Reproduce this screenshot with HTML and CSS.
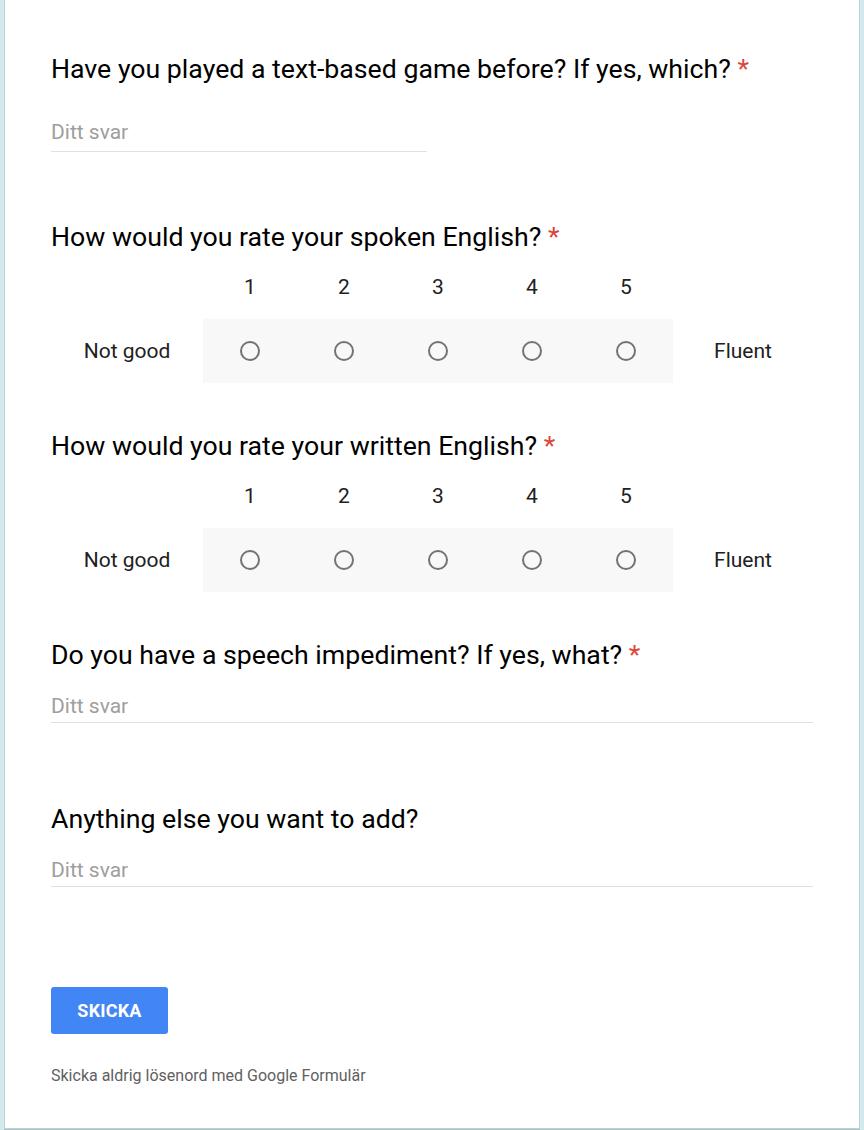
FILE: index.html
```html
<!DOCTYPE html>
<html lang="sv">
<head>
<meta charset="utf-8">
<title>Formulär</title>
<link rel="stylesheet" href="styles.css">
</head>
<body>
<div class="card">
  <div class="q q-first">
    <div class="title">Have you played a text-based game before? If yes, which? <span class="req">*</span></div>
    <div class="answer answer-short answer-first">Ditt svar</div>
  </div>

  <div class="q q-gap-large">
    <div class="title">How would you rate your spoken English? <span class="req">*</span></div>
    <div class="scale">
      <div class="scale-head">
        <div class="lbl"></div>
        <div class="num">1</div><div class="num">2</div><div class="num">3</div><div class="num">4</div><div class="num">5</div>
        <div class="lbl-r"></div>
      </div>
      <div class="scale-row">
        <div class="lbl">Not good</div>
        <div class="opts">
          <span class="radio"></span><span class="radio"></span><span class="radio"></span><span class="radio"></span><span class="radio"></span>
        </div>
        <div class="lbl-r">Fluent</div>
      </div>
    </div>
  </div>

  <div class="q q-gap">
    <div class="title">How would you rate your written English? <span class="req">*</span></div>
    <div class="scale">
      <div class="scale-head">
        <div class="lbl"></div>
        <div class="num">1</div><div class="num">2</div><div class="num">3</div><div class="num">4</div><div class="num">5</div>
        <div class="lbl-r"></div>
      </div>
      <div class="scale-row">
        <div class="lbl">Not good</div>
        <div class="opts">
          <span class="radio"></span><span class="radio"></span><span class="radio"></span><span class="radio"></span><span class="radio"></span>
        </div>
        <div class="lbl-r">Fluent</div>
      </div>
    </div>
  </div>

  <div class="q q-gap">
    <div class="title">Do you have a speech impediment? If yes, what? <span class="req">*</span></div>
    <div class="answer">Ditt svar</div>
  </div>

  <div class="q q-gap-after-input">
    <div class="title">Anything else you want to add?</div>
    <div class="answer">Ditt svar</div>
  </div>

  <button class="submit" type="button">SKICKA</button>
  <div class="footer">Skicka aldrig lösenord med Google Formulär</div>
</div>
</body>
</html>
```

FILE: styles.css
```css
html, body {
  margin: 0;
  padding: 0;
}
body {
  background: #d3e9ec;
  font-family: Roboto, "Noto Sans", "Liberation Sans", Arial, sans-serif;
  color: #000;
  height: 1130px;
  overflow: hidden;
}
.card {
  background: #fff;
  margin: 0 5px;
  padding: 54px 46px 0;
  height: 1128px;
  box-sizing: border-box;
  box-shadow: 0 0 0 1px #b9d4d9, 0 1px 0 1px #aebfc2;
}
.title {
  font-size: 26.7px;
  line-height: 30px;
  color: #000;
}
.req {
  color: #db4437;
}
.q-gap-large {
  margin-top: 70px;
}
.q-gap {
  margin-top: 48px;
}
.q-gap-after-input {
  margin-top: 81px;
}
.answer {
  margin-top: 24px;
  font-size: 21px;
  line-height: 24px;
  color: #9e9e9e;
  padding-bottom: 4px;
  border-bottom: 1px solid #e0e0e0;
}
.answer-first {
  margin-top: 36px;
  padding-bottom: 7px;
}
.answer-short {
  width: 376px;
}
.scale-head {
  display: grid;
  grid-template-columns: 152px repeat(5, 94px) 140px;
  margin-top: 23px;
  font-size: 21px;
  line-height: 24px;
}
.num {
  text-align: center;
  color: #212121;
}
.scale-row {
  display: grid;
  grid-template-columns: 152px 470px 140px;
  height: 64px;
  margin-top: 20px;
  align-items: center;
  font-size: 21px;
}
.lbl, .lbl-r {
  text-align: center;
  color: #212121;
}
.opts {
  height: 64px;
  background: #f8f8f8;
  display: grid;
  grid-template-columns: repeat(5, 94px);
  align-items: center;
  justify-items: center;
}
.radio {
  width: 16px;
  height: 16px;
  border: 2px solid #737373;
  border-radius: 50%;
  box-sizing: content-box;
}
.submit {
  display: block;
  margin-top: 100px;
  width: 117px;
  height: 47px;
  border: none;
  border-radius: 3px;
  background: #4285f4;
  color: #fff;
  font-family: inherit;
  font-size: 18px;
  font-weight: 700;
  padding: 0;
  letter-spacing: 0.2px;
}
.footer {
  margin-top: 33px;
  font-size: 16px;
  line-height: 18px;
  color: #616161;
}
```
